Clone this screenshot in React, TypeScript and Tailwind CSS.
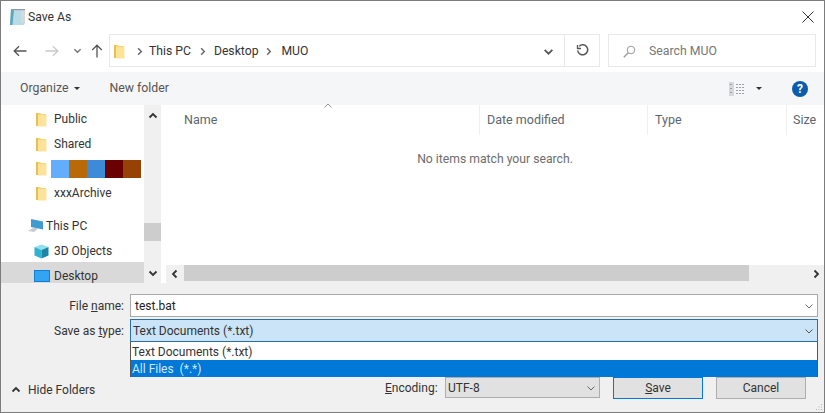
import React from "react";

const Folder = ({ className = "" }: { className?: string }) => (
  <svg width="11" height="15" viewBox="0 0 11 15" className={`shrink-0 ${className}`}>
    <path d="M0 1h4l1.500 1H10v12H0z" fill="#f6d777" />
    <path d="M2 3h8.500v11.500H2z" fill="#fbe49a" />
    <path d="M0 1h2v13H0z" fill="#e9bf55" />
  </svg>
);

const Chev = ({ dir = "down", color = "#555", size = 10, w = 1.6 }: { dir?: "down" | "up" | "left" | "right"; color?: string; size?: number; w?: number }) => {
  const d = { down: "M1.500 3.500 5 7l3.500-3.500", up: "M1.500 6.500 5 3l3.500 3.500", left: "M6.500 1.500 3 5l3.500 3.500", right: "M3.500 1.500 7 5 3.500 8.500" }[dir];
  return (
    <svg width={size} height={size} viewBox="0 0 10 10" className="shrink-0">
      <path d={d} fill="none" stroke={color} strokeWidth={w} />
    </svg>
  );
};

const SideRow = ({ icon, children, pl = "pl-[35px]", gap = "gap-[7px]", className = "" }: { icon: React.ReactNode; children?: React.ReactNode; pl?: string; gap?: string; className?: string }) => (
  <div className={`flex items-center shrink-0 pt-[3px] ${pl} ${gap} text-[12px] text-[#333] ${className}`}>
    {icon}
    {children}
  </div>
);

export default function App() {
  return (
    <div className="w-[825px] h-[413px] flex flex-col relative overflow-hidden bg-white border border-[#7c7c7c] font-['Roboto',sans-serif] text-[#444]">
      {/* Title */}
      <div className="h-[31px] shrink-0 flex items-center pt-[1px] pl-[8px] pr-[10px]">
        <svg width="17" height="18" viewBox="0 0 17 18">
          <path d="M2 1h14v14l-1 2H1z" fill="#b9dbe6" />
          <path d="M2 1h3L3.500 17H1z" fill="#5fa6bd" />
          <path d="M12 2h4v13h-4z" fill="#d3d9dc" />
          <path d="M2 1h14v1.200H2z" fill="#8c9ba3" />
        </svg>
        <span className="ml-[2px] text-[12.200px] text-[#333]">Save As</span>
        <svg width="12" height="12" viewBox="0 0 12 12" className="ml-auto">
          <path d="M.5.500l11 11M11.500.500l-11 11" stroke="#333" strokeWidth="1" fill="none" />
        </svg>
      </div>
      {/* Nav */}
      <div className="h-[40px] shrink-0 flex items-start pl-[12px] pr-[8px] pt-[2px]">
        <div className="flex items-center h-[33px] w-[96px] shrink-0">
          <svg width="14" height="12" viewBox="0 0 14 12">
            <path d="M13.500 6H1.500M6 1.200 1.200 6 6 10.800" fill="none" stroke="#555" strokeWidth="1.300" />
          </svg>
          <svg width="14" height="12" viewBox="0 0 14 12" className="ml-[18px]">
            <path d="M.5 6h12M8 1.200 12.800 6 8 10.800" fill="none" stroke="#c9c9c9" strokeWidth="1.300" />
          </svg>
          <span className="ml-[14px]"><Chev size={9} color="#777" /></span>
          <svg width="12" height="14" viewBox="0 0 12 14" className="ml-[9px]">
            <path d="M6 13.500V1.500M1.200 6 6 1.200 10.800 6" fill="none" stroke="#555" strokeWidth="1.300" />
          </svg>
        </div>
        <div className="w-[456px] h-[33px] border border-[#e6e8ea] flex items-center pl-[4px] pt-[1px] text-[12.200px] text-[#333]">
          <Folder />
          <span className="ml-[10px]"><Chev dir="right" size={9} color="#666" /></span>
          <span className="ml-[5px]">This PC</span>
          <span className="ml-[7px]"><Chev dir="right" size={9} color="#666" /></span>
          <span className="ml-[7px]">Desktop</span>
          <span className="ml-[6px]"><Chev dir="right" size={9} color="#666" /></span>
          <span className="ml-[8px]">MUO</span>
          <span className="ml-auto mr-[10px]"><Chev size={11} color="#555" /></span>
        </div>
        <div className="w-[35px] h-[33px] border border-l-0 border-[#e6e8ea] flex items-center justify-center">
          <svg width="13" height="13" viewBox="0 0 13 13">
            <path d="M3.200 2.200A5 5 0 1 1 1.700 6.500" fill="none" stroke="#555" strokeWidth="1.500" />
            <path d="M1.500 1v3.500H5" fill="none" stroke="#555" strokeWidth="1.300" />
          </svg>
        </div>
        <div className="ml-[8px] flex-1 h-[33px] border border-[#e6e8ea] flex items-center pl-[14px] pt-[1px] text-[12.300px] text-[#777]">
          <svg width="13" height="13" viewBox="0 0 13 13">
            <circle cx="8" cy="5" r="3.800" fill="none" stroke="#999" strokeWidth="1" />
            <path d="M5.200 7.800.8 12.200" stroke="#999" strokeWidth="1.300" />
          </svg>
          <span className="ml-[13px]">Search MUO</span>
        </div>
      </div>
      {/* Toolbar */}
      <div className="h-[33px] shrink-0 bg-[#f5f6f8] flex items-center pl-[19px] pr-[16px] text-[12.300px] text-[#555]">
        <span>Organize</span>
        <span className="ml-[6px] w-0 h-0 border-x-[3px] border-x-transparent border-t-[3px] border-t-[#333]" />
        <span className="ml-[29px]">New folder</span>
        <svg width="16" height="14" viewBox="0 0 16 14" className="ml-auto">
          <path d="M0 0h5v14H0z" fill="#d5d8da" />
          <path d="M1 2.500h3M1 6.500h3M1 10.500h3M7 2.500h9M7 5.500h9M7 8.500h9M7 11.500h9" stroke="#9aa0a4" strokeWidth="1" strokeDasharray="2 1" />
        </svg>
        <span className="ml-[11px] w-0 h-0 border-x-[3px] border-x-transparent border-t-[3px] border-t-[#333]" />
        <span className="ml-[30px] w-[16px] h-[16px] rounded-full bg-[#0b5cad] text-white text-[12px] font-bold flex items-center justify-center">?</span>
      </div>
      {/* Main */}
      <div className="h-[178px] shrink-0 flex">
        <div className="w-[143px] shrink-0 flex flex-col overflow-hidden">
          <SideRow icon={<Folder />} className="h-[25px]">Public</SideRow>
          <SideRow icon={<Folder />} className="h-[25px]">Shared</SideRow>
          <SideRow icon={<Folder />} className="h-[24px]">
            <div className="flex h-[18px] -ml-[3px]">
              <div className="w-[18px] bg-[#63aefc]" />
              <div className="w-[18px] bg-[#b96a08]" />
              <div className="w-[18px] bg-[#3d8ad9]" />
              <div className="w-[18px] bg-[#6a0000]" />
              <div className="w-[18px] bg-[#974104]" />
            </div>
          </SideRow>
          <SideRow icon={<Folder />} className="h-[25px]">xxxArchive</SideRow>
          <div className="h-[8px] shrink-0" />
          <SideRow pl="pl-[26px]" gap="gap-[2px]" className="h-[25px]" icon={
            <svg width="17" height="16" viewBox="0 0 17 16">
              <path d="M4 1l12 2.500v8L4 9z" fill="#3f9bd0" />
              <path d="M1 13l5-3h6l-5 4z" fill="#c5ced4" />
            </svg>
          }>This PC</SideRow>
          <SideRow pl="pl-[33px]" gap="gap-[5px]" className="h-[25px]" icon={
            <svg width="15" height="15" viewBox="0 0 15 15">
              <path d="M7.500.5l7 2.500-7 3-7-3z" fill="#8fe0ee" />
              <path d="M.5 3l7 3v8.500l-7-3z" fill="#2fb1cf" />
              <path d="M14.500 3l-7 3v8.500l7-3z" fill="#1d86a8" />
            </svg>
          }>3D Objects</SideRow>
          <SideRow pl="pl-[33px]" gap="gap-[4px]" className="bg-[#d9d9d9] h-[25px]" icon={
            <svg width="16" height="13" viewBox="0 0 16 13">
              <path d="M0 0h16v12H0z" fill="#0f7fd6" />
              <path d="M1 1h14v10H1z" fill="#35a3f4" />
            </svg>
          }>Desktop</SideRow>
        </div>
        <div className="w-[17px] shrink-0 bg-[#f0f0f0] flex flex-col">
          <div className="h-[22px] flex items-center justify-center"><Chev dir="up" color="#333" w={1.800} /></div>
          <div className="h-[96px]" />
          <div className="h-[18px] bg-[#cdcdcd]" />
          <div className="flex-1" />
          <div className="h-[21px] flex items-center justify-center"><Chev color="#333" w={1.800} /></div>
        </div>
        <div className="flex-1 min-w-0 flex flex-col ml-[2px] relative">
          <div className="flex-1 min-h-0">
            <div className="h-[30px] flex text-[12.500px] text-[#5b6670] items-center relative">
              <span className="absolute left-[160px] -top-[4px]"><Chev dir="up" color="#999" size={10} w={1} /></span>
              <div className="w-[317px] h-full flex items-center pl-[21px] pt-[1px] border-r border-[#eef0f2]">Name</div>
              <div className="w-[168px] h-full flex items-center pl-[7px] pt-[1px] border-r border-[#eef0f2]">Date modified</div>
              <div className="w-[139px] h-full flex items-center pl-[7px] pt-[1px] border-r border-[#eef0f2]">Type</div>
              <div className="flex-1 h-full flex items-center pl-[6px] pt-[1px]">Size</div>
            </div>
            <div className="text-center text-[12.200px] text-[#6d6d6d] mt-[15px] pl-[3px]">No items match your search.</div>
          </div>
          <div className="h-[18px] shrink-0 flex">
            <div className="w-[3px] bg-white" />
            <div className="flex-1 bg-[#f0f0f0] flex">
              <div className="w-[18px] flex items-center justify-center"><Chev dir="left" color="#333" w={1.800} /></div>
              <div className="w-[565px] h-[16px] bg-[#cdcdcd]" />
              <div className="flex-1 flex items-center justify-end pr-[3px]"><Chev dir="right" color="#333" w={1.800} /></div>
            </div>
          </div>
        </div>
      </div>
      {/* Bottom */}
      <div className="flex-1 bg-[#f0f0f0] flex flex-col text-[12px] text-[#333] relative">
        <div className="flex items-center mt-[11px] h-[23px]">
          <div className="w-[123px] text-right pt-[1px]"><span>File <u>n</u>ame:</span></div>
          <div className="ml-[6px] w-[688px] h-[23px] bg-white border border-[#a9a9a9] flex items-center pl-[4px] pt-[1px] text-[#222] shrink-0">
            test.bat
            <span className="ml-auto mr-[3px]"><Chev color="#666" size={10} w={1} /></span>
          </div>
        </div>
        <div className="flex items-center mt-[2px] h-[23px]">
          <div className="w-[123px] text-right pt-[1px]"><span>Save as <u>t</u>ype:</span></div>
          <div className="ml-[6px] w-[688px] h-[23px] bg-[#cce4f7] border border-[#2b6f9f] flex items-center pl-[2px] pt-[1px] shrink-0">
            Text Documents (*.txt)
            <span className="ml-auto mr-[3px]"><Chev color="#555" size={10} w={1} /></span>
          </div>
        </div>
        <div className="absolute left-[129px] top-[59px] w-[688px] border-x border-[#555] z-10 flex flex-col">
          <div className="h-[18px] bg-white flex items-center pl-[1px] pt-[2px]">Text Documents (*.txt)</div>
          <div className="h-[17px] bg-[#0078d7] text-[#cfe8fb] flex items-center pl-[1px] pt-[1px] whitespace-pre">All Files  (*.*)</div>
        </div>
        <div className="flex items-start mt-[35px] h-[22px]">
          <div className="w-[384px] flex items-center pl-[10px] mt-[4px] h-[18px]">
            <Chev dir="up" color="#333" w={1.800} />
            <span className="ml-[7px]">Hide Folders</span>
          </div>
          <div className="w-[60px] h-[21px] flex items-center"><span><u>E</u>ncoding:</span></div>
          <div className="w-[155px] h-[21px] bg-[#e1e1e1] border border-[#adadad] flex items-center pl-[2px]">
            UTF-8
            <span className="ml-auto mr-[3px]"><Chev color="#666" size={10} w={1} /></span>
          </div>
          <div className="ml-[13px] w-[90px] h-[22px] bg-[#e1e1e1] border border-[#0078d7] flex items-center justify-center"><span><u>S</u>ave</span></div>
          <div className="ml-[13px] w-[90px] h-[22px] bg-[#e1e1e1] border border-[#adadad] flex items-center justify-center">Cancel</div>
        </div>
        <svg width="8" height="8" viewBox="0 0 8 8" className="absolute right-[1px] bottom-[1px]">
          <path d="M6 1h1v1H6zM3.500 3.500h1v1h-1zM6 3.500h1v1H6zM1 6h1v1H1zM3.500 6h1v1h-1zM6 6h1v1H6z" fill="#b5b5b5" />
        </svg>
      </div>
    </div>
  );
}
